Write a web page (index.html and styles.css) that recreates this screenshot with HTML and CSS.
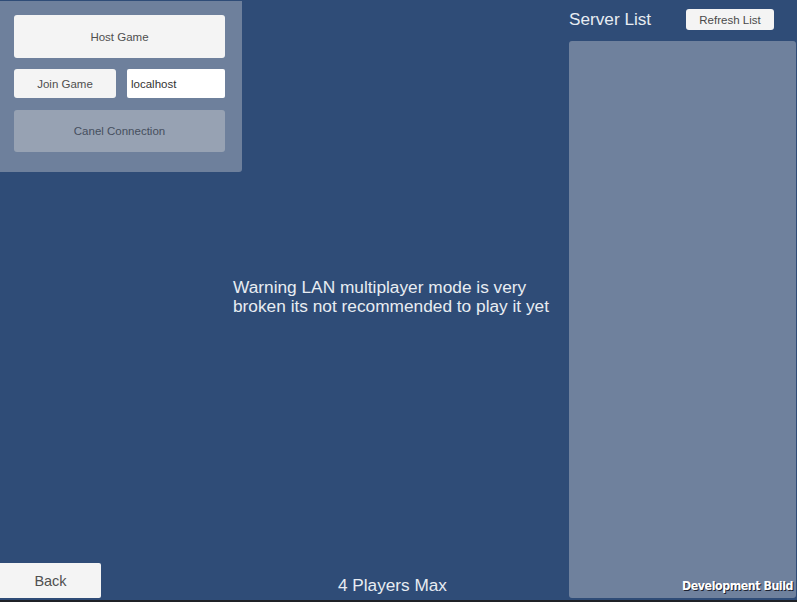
FILE: index.html
```html
<!DOCTYPE html>
<html>
<head>
<meta charset="utf-8">
<link rel="stylesheet" href="styles.css">
</head>
<body>
<div class="screen">
  <div class="left">
    <div class="host-panel">
      <div class="btn btn-host">Host Game</div>
      <div class="join-row">
        <div class="btn btn-join">Join Game</div>
        <div class="addr">localhost</div>
      </div>
      <div class="btn btn-cancel">Canel Connection</div>
    </div>
    <div class="warning">Warning LAN multiplayer mode is very broken its not recommended to play it yet</div>
    <div class="bottom">
      <div class="btn btn-back">Back</div>
      <div class="players">4 Players Max</div>
    </div>
  </div>
  <div class="right">
    <div class="list-header">
      <div class="list-title">Server List</div>
      <div class="btn btn-refresh">Refresh List</div>
    </div>
    <div class="server-list"></div>
  </div>
  <div class="dev-build">Development Build</div>
</div>
</body>
</html>
```

FILE: styles.css
```css
html, body {
  margin: 0;
  padding: 0;
  background: #1f2126;
}
body {
  width: 797px;
  height: 602px;
  overflow: hidden;
  font-family: "Liberation Sans", Arial, sans-serif;
}
.screen {
  position: relative;
  width: 797px;
  height: 600px;
  background: #2f4c77;
  border-bottom: 2px solid #1f2126;
  display: flex;
}
.left {
  width: 569px;
  display: flex;
  flex-direction: column;
}
.host-panel {
  margin-top: 1px;
  width: 242px;
  height: 171px;
  box-sizing: border-box;
  background: #6e809c;
  border-radius: 0 0 3px 0;
  padding: 14px 17px 0 14px;
  display: flex;
  flex-direction: column;
}
.btn {
  background: #f4f4f4;
  color: #4f4f4f;
  border-radius: 3px;
  display: flex;
  align-items: center;
  justify-content: center;
  font-size: 11.5px;
  box-sizing: border-box;
}
.btn-host {
  height: 43px;
}
.join-row {
  display: flex;
  margin-top: 11px;
  gap: 11px;
  height: 29px;
}
.btn-join {
  width: 102px;
}
.addr {
  flex: 1;
  background: #ffffff;
  border-radius: 2px;
  color: #333333;
  font-size: 11.5px;
  display: flex;
  align-items: center;
  padding-left: 4px;
}
.btn-cancel {
  margin-top: 12px;
  height: 42px;
  background: #97a2b3;
  color: #464f5e;
}
.warning {
  margin-top: 106px;
  margin-left: 233px;
  width: 330px;
  color: #e8ecf2;
  font-size: 17.3px;
  line-height: 19px;
}
.bottom {
  margin-top: auto;
  display: flex;
  align-items: flex-end;
  padding-bottom: 2px;
}
.btn-back {
  width: 101px;
  height: 35px;
  font-size: 14.5px;
  border-radius: 0 2px 2px 0;
  color: #505050;
}
.players {
  margin-left: 237px;
  color: #e8ecf2;
  font-size: 17.2px;
  line-height: 20px;
  padding-bottom: 3px;
}
.right {
  width: 227px;
  display: flex;
  flex-direction: column;
}
.list-header {
  height: 41px;
  display: flex;
  align-items: flex-start;
}
.list-title {
  color: #e8ecf2;
  font-size: 17.2px;
  margin-top: 9px;
  width: 117px;
}
.btn-refresh {
  margin-top: 9px;
  width: 88px;
  height: 21px;
  font-size: 11.5px;
  color: #4a4a4a;
}
.server-list {
  height: 557px;
  background: #6f819d;
  border-radius: 3px;
}
.dev-build {
  position: absolute;
  right: 4px;
  bottom: 7px;
  font-family: "DejaVu Sans Condensed", "DejaVu Sans", sans-serif;
  font-stretch: condensed;
  font-weight: bold;
  font-size: 12.3px;
  letter-spacing: -0.45px;
  color: #ffffff;
  text-shadow: 1px 1px 0 #1c2230;
}
```
